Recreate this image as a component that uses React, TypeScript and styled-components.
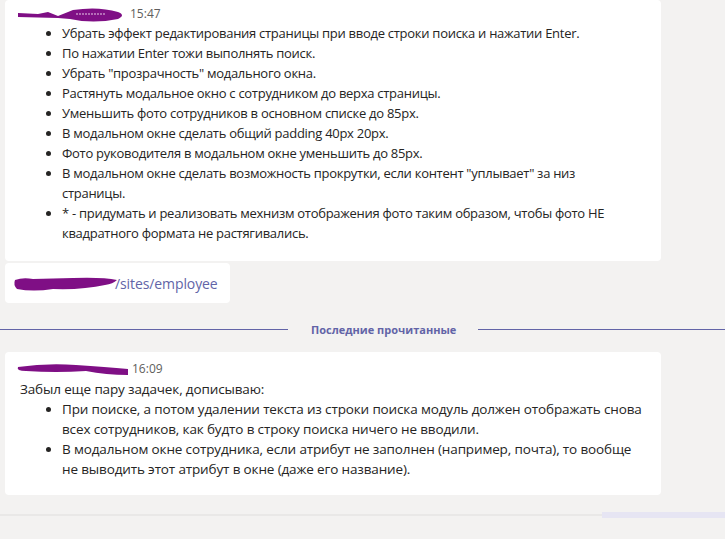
import styled, { createGlobalStyle } from 'styled-components'

const GlobalStyle = createGlobalStyle`
  html, body {
    margin: 0;
    padding: 0;
    background: #f3f2f1;
    overflow: hidden;
  }
  body {
    font-family: "Open Sans", "Noto Sans", sans-serif;
    color: #252423;
  }
`

const Page = styled.div`
  width: 725px;
  height: 539px;
  background: #f3f2f1;
  display: flex;
  flex-direction: column;
  overflow: hidden;
`

const Thread = styled.div`
  padding-left: 5px;
  display: flex;
  flex-direction: column;
  align-items: flex-start;
`

const Card = styled.div<{ $top: number; $bottom: number; $width: number }>`
  background: #ffffff;
  border-radius: 4px;
  width: ${p => p.$width}px;
  box-sizing: border-box;
  padding: ${p => p.$top}px 0 ${p => p.$bottom}px 15px;
`

const Header = styled.div`
  display: flex;
  align-items: center;
  height: 18px;
  gap: 4px;
`

const Time = styled.span`
  font-size: 12px;
  color: #605e5c;
  line-height: 18px;
`

const Body = styled.div<{ $size: number; $spacing: number }>`
  font-size: ${p => p.$size}px;
  letter-spacing: ${p => p.$spacing}px;
  line-height: 20px;
  white-space: nowrap;
`

const Intro = styled.div`
  margin-top: 1px;
`

const List = styled.ul`
  margin: 0;
  padding-left: 42px;
  list-style: disc;

  li {
    line-height: 20px;
  }
`

const LinkCard = styled.div`
  margin-top: 2px;
  background: #ffffff;
  border-radius: 4px;
  height: 40px;
  width: 225px;
  box-sizing: border-box;
  padding-left: 8px;
  display: flex;
  align-items: center;
`

const LinkText = styled.span`
  font-size: 14px;
  color: #6264a7;
  margin-left: -4px;
  letter-spacing: -0.1px;
`

const Divider = styled.div`
  display: flex;
  align-items: center;
  height: 49px;
  padding-top: 3px;
  box-sizing: border-box;
`

const Line = styled.div<{ $width: number }>`
  height: 1px;
  background: #6264a7;
  width: ${p => p.$width}px;
  flex-shrink: 0;
`

const DividerLabel = styled.span`
  font-size: 11px;
  font-weight: 700;
  color: #6264a7;
  padding: 0 22px 0 23px;
  white-space: nowrap;
`

const Footer = styled.div`
  margin-top: 16px;
  display: flex;
  align-items: center;
  height: 7px;
`

const FooterLine = styled.div`
  flex: 1;
  height: 2px;
  background: #e9e8e7;
`

const FooterBar = styled.div`
  width: 123px;
  height: 6px;
  background: #e6e5f3;
`

const Scribble = ({ variant }: { variant: 'name1' | 'link' | 'name2' }) => {
  if (variant === 'name1') {
    return (
      <svg width="108" height="16" viewBox="0 0 108 16" style={{ marginLeft: -2 }}>
        <path d="M0 7 L20 8 L30 6 L40 10 L55 4 Q80 0 100 6 Q108 9 100 13 Q75 18 52 13 L40 12 L0 11 Z" fill="#7f0f85" />
        <path d="M58 8 L88 8" stroke="#e9cbe9" strokeWidth="1.2" strokeDasharray="2 1" />
      </svg>
    )
  }
  if (variant === 'link') {
    return (
      <svg width="106" height="22" viewBox="0 0 106 22">
        <path d="M2 8 Q10 5 20 7 L60 6 Q90 5 104 8 Q100 12 92 13 Q70 18 40 17 Q20 20 4 17 Q0 13 2 8 Z" fill="#7f0f85" />
      </svg>
    )
  }
  return (
    <svg width="112" height="16" viewBox="0 0 112 16" style={{ marginLeft: -4 }}>
      <path d="M2 6 Q30 2 60 4 Q90 6 112 8 L112 14 Q90 14 70 10 Q40 12 10 10 Q0 10 2 6 Z" fill="#7f0f85" />
    </svg>
  )
}

const App = () => {
  return (
    <>
      <GlobalStyle />
      <Page>
        <Thread>
          <Card $top={5} $bottom={18} $width={656}>
            <Header>
              <Scribble variant="name1" />
              <Time>15:47</Time>
            </Header>
            <Body $size={13} $spacing={-0.28}>
              <List>
                <li>Убрать эффект редактирования страницы при вводе строки поиска и нажатии Enter.</li>
                <li>По нажатии Enter тожи выполнять поиск.</li>
                <li>Убрать "прозрачность" модального окна.</li>
                <li>Растянуть модальное окно с сотрудником до верха страницы.</li>
                <li>Уменьшить фото сотрудников в основном списке до 85px.</li>
                <li>В модальном окне сделать общий padding 40px 20px.</li>
                <li>Фото руководителя в модальном окне уменьшить до 85px.</li>
                <li>В модальном окне сделать возможность прокрутки, если контент "уплывает" за низ<br />страницы.</li>
                <li>* - придумать и реализовать мехнизм отображения фото таким образом, чтобы фото НЕ<br />квадратного формата не растягивались.</li>
              </List>
            </Body>
          </Card>

          <LinkCard>
            <Scribble variant="link" />
            <LinkText>/sites/employee</LinkText>
          </LinkCard>
        </Thread>

        <Divider>
          <Line $width={288} />
          <DividerLabel>Последние прочитанные</DividerLabel>
          <Line $width={250} />
        </Divider>

        <Thread>
          <Card $top={8} $bottom={16} $width={656}>
            <Header>
              <Scribble variant="name2" />
              <Time>16:09</Time>
            </Header>
            <Body $size={13.5} $spacing={-0.14}>
              <Intro>Забыл еще пару задачек, дописываю:</Intro>
              <List>
                <li>При поиске, а потом удалении текста из строки поиска модуль должен отображать снова<br />всех сотрудников, как будто в строку поиска ничего не вводили.</li>
                <li>В модальном окне сотрудника, если атрибут не заполнен (например, почта), то вообще<br />не выводить этот атрибут в окне (даже его название).</li>
              </List>
            </Body>
          </Card>
        </Thread>

        <Footer>
          <FooterLine />
          <FooterBar />
        </Footer>
      </Page>
    </>
  )
}

export default App
